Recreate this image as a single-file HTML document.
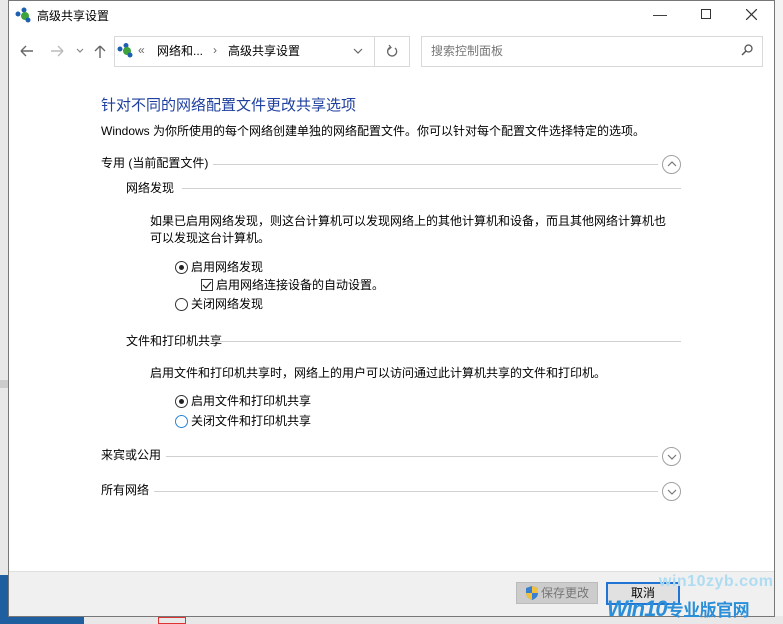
<!DOCTYPE html>
<html><head><meta charset="utf-8">
<style>
*{margin:0;padding:0;box-sizing:border-box}
body{width:783px;height:624px;overflow:hidden;background:#fff;font-family:"Liberation Sans","Noto Sans CJK SC",sans-serif;font-size:12px;color:#000;position:relative}
.a{position:absolute;white-space:nowrap;line-height:16px}
.ln{position:absolute;height:1px;background:#d0d0d0}
.circ{position:absolute;width:19px;height:19px;border:1px solid #a0a0a0;border-radius:50%}
.rad{position:absolute;width:13px;height:13px;border:1px solid #333;border-radius:50%;background:#fff}
</style></head><body>
<div style="position:absolute;left:0;top:0;width:8px;height:624px;background:#e8e8e8"></div>
<div style="position:absolute;left:0;top:380px;width:8px;height:8px;background:#ccc"></div>
<div style="position:absolute;left:0;top:575px;width:8px;height:49px;background:#1f5fa0"></div>
<div style="position:absolute;left:774px;top:0;width:9px;height:624px;background:#f4f4f4"></div>
<div style="position:absolute;left:0;top:616px;width:783px;height:8px;background:#e8e8e8"></div>
<div style="position:absolute;left:0;top:616px;width:84px;height:8px;background:#1f5fa0"></div>
<div style="position:absolute;left:158px;top:617px;width:28px;height:7px;border:1px solid #d33"></div>
<div style="position:absolute;left:8px;top:0;width:767px;height:617px;background:#fff;border:1px solid #777"></div>
<svg style="position:absolute;left:15px;top:7px" width="18" height="16"><circle cx="3" cy="7" r="2.5" fill="#1d5fb0"/><circle cx="9" cy="3" r="2.5" fill="#1d5fb0"/><circle cx="10" cy="9" r="4" fill="#3da33a"/><circle cx="13" cy="13" r="2.5" fill="#1d5fb0"/></svg>
<div class="a" style="left:37px;top:8px">高级共享设置</div>
<div class="a" style="left:653px;top:6px;font-size:14px;color:#333">—</div>
<div style="position:absolute;left:701px;top:9px;width:10px;height:10px;border:1px solid #333"></div>
<svg style="position:absolute;left:746px;top:9px" width="11" height="11"><path d="M0 0L11 11M11 0L0 11" stroke="#333" stroke-width="1.2"/></svg>
<svg style="position:absolute;left:19px;top:44px" width="90" height="14"><path d="M2 7H14M2 7L7 2M2 7L7 12" stroke="#666" stroke-width="1.4" fill="none"/><path d="M32 7H44M44 7L39 2M44 7L39 12" stroke="#bbb" stroke-width="1.4" fill="none"/><path d="M58 5L61 8L64 5" stroke="#888" stroke-width="1.2" fill="none"/><path d="M81 2V14M81 2L76 7M81 2L86 7" stroke="#666" stroke-width="1.4" fill="none"/></svg>
<div style="position:absolute;left:114px;top:36px;width:296px;height:31px;border:1px solid #d9d9d9"></div>
<div style="position:absolute;left:374px;top:37px;width:1px;height:29px;background:#d9d9d9"></div>
<svg style="position:absolute;left:117px;top:43px" width="18" height="16"><circle cx="3" cy="6" r="2.5" fill="#1d5fb0"/><circle cx="9" cy="2.5" r="2.5" fill="#1d5fb0"/><circle cx="10" cy="8" r="4" fill="#3da33a"/><circle cx="13" cy="12" r="2.5" fill="#1d5fb0"/></svg>
<div class="a" style="left:138px;top:42px;color:#666">«</div>
<div class="a" style="left:157px;top:43px">网络和...</div>
<div class="a" style="left:213px;top:42px;color:#666">›</div>
<div class="a" style="left:228px;top:43px">高级共享设置</div>
<svg style="position:absolute;left:353px;top:48px" width="10" height="6"><path d="M1 1L5 5L9 1" stroke="#666" stroke-width="1.2" fill="none"/></svg>
<svg style="position:absolute;left:386px;top:44px" width="12" height="14"><path d="M9 4A4.5 4.5 0 1 1 4 3.5" stroke="#666" stroke-width="1.3" fill="none"/><path d="M3 1L5 3.5L2.5 5.5" stroke="#666" stroke-width="1.2" fill="none"/></svg>
<div style="position:absolute;left:421px;top:36px;width:342px;height:31px;border:1px solid #d9d9d9"></div>
<div class="a" style="left:431px;top:43px;color:#777">搜索控制面板</div>
<svg style="position:absolute;left:741px;top:44px" width="12" height="12"><circle cx="7.5" cy="4.5" r="3.5" stroke="#555" stroke-width="1.3" fill="none"/><path d="M5 7L1 11" stroke="#555" stroke-width="1.5"/></svg>
<div class="a" style="left:101px;top:96px;font-size:15px;line-height:20px;color:#1e3f9e">针对不同的网络配置文件更改共享选项</div>
<div class="a" style="left:101px;top:123px">Windows 为你所使用的每个网络创建单独的网络配置文件。你可以针对每个配置文件选择特定的选项。</div>
<div class="a" style="left:101px;top:155px">专用 (当前配置文件)</div>
<div class="ln" style="left:213px;top:164px;width:445px"></div>
<div class="circ" style="left:662px;top:155px"></div>
<svg style="position:absolute;left:666px;top:160px" width="12" height="8"><path d="M2 6L6 2L10 6" stroke="#777" stroke-width="1.2" fill="none"/></svg>
<div class="a" style="left:126px;top:180px">网络发现</div>
<div class="ln" style="left:182px;top:188px;width:499px"></div>
<div class="a" style="left:150px;top:213px">如果已启用网络发现，则这台计算机可以发现网络上的其他计算机和设备，而且其他网络计算机也</div>
<div class="a" style="left:150px;top:230px">可以发现这台计算机。</div>
<div class="rad" style="left:175px;top:261px"></div><div style="position:absolute;left:179px;top:265px;width:5px;height:5px;border-radius:50%;background:#222"></div>
<div class="a" style="left:191px;top:259px">启用网络发现</div>
<div style="position:absolute;left:201px;top:279px;width:12px;height:12px;border:1px solid #333"></div>
<svg style="position:absolute;left:202px;top:280px" width="10" height="10"><path d="M1 5L4 8L9 2" stroke="#222" stroke-width="1.2" fill="none"/></svg>
<div class="a" style="left:216px;top:277px">启用网络连接设备的自动设置。</div>
<div class="rad" style="left:175px;top:298px"></div>
<div class="a" style="left:191px;top:296px">关闭网络发现</div>
<div class="a" style="left:126px;top:333px">文件和打印机共享</div>
<div class="ln" style="left:214px;top:341px;width:467px"></div>
<div class="a" style="left:150px;top:365px">启用文件和打印机共享时，网络上的用户可以访问通过此计算机共享的文件和打印机。</div>
<div class="rad" style="left:175px;top:395px"></div><div style="position:absolute;left:179px;top:399px;width:5px;height:5px;border-radius:50%;background:#222"></div>
<div class="a" style="left:191px;top:393px">启用文件和打印机共享</div>
<div class="rad" style="left:175px;top:415px;border-color:#2a85d8"></div>
<div class="a" style="left:191px;top:413px">关闭文件和打印机共享</div>
<div class="a" style="left:101px;top:447px">来宾或公用</div>
<div class="ln" style="left:166px;top:456px;width:492px"></div>
<div class="circ" style="left:662px;top:447px"></div>
<svg style="position:absolute;left:666px;top:453px" width="12" height="8"><path d="M2 2L6 6L10 2" stroke="#777" stroke-width="1.2" fill="none"/></svg>
<div class="a" style="left:101px;top:482px">所有网络</div>
<div class="ln" style="left:154px;top:491px;width:504px"></div>
<div class="circ" style="left:662px;top:482px"></div>
<svg style="position:absolute;left:666px;top:488px" width="12" height="8"><path d="M2 2L6 6L10 2" stroke="#777" stroke-width="1.2" fill="none"/></svg>
<div style="position:absolute;left:9px;top:571px;width:765px;height:45px;background:#f0f0f0;border-top:1px solid #dfdfdf"></div>
<div style="position:absolute;left:516px;top:582px;width:82px;height:22px;background:#ccc;border:1px solid #bbb"></div>
<svg style="position:absolute;left:525px;top:585px" width="14" height="16"><path d="M7 1L13 3V8C13 12 10 14 7 15C4 14 1 12 1 8V3Z" fill="#3a7fd0"/><path d="M7 1L13 3V8H7Z" fill="#f0c040"/><path d="M1 8H7V15C4 14 1 12 1 8Z" fill="#f0c040"/></svg>
<div class="a" style="left:541px;top:585px;color:#777">保存更改</div>
<div style="position:absolute;left:606px;top:582px;width:74px;height:23px;background:#e1e1e1;border:2px solid #1f74d6"></div>
<div class="a" style="left:631px;top:585px">取消</div>
<div class="a" style="left:659px;top:573px;font-size:16px;line-height:18px;font-weight:bold;color:#aedcf2;letter-spacing:0.5px">win10zyb.com</div>
<div class="a" style="left:607px;top:597px;font-size:22px;line-height:24px;font-weight:bold;font-style:italic;color:#2a8fd8;letter-spacing:-1px">Win10<span style="font-size:17px;font-style:normal;letter-spacing:-0.5px">专业版官网</span></div>
</body></html>
